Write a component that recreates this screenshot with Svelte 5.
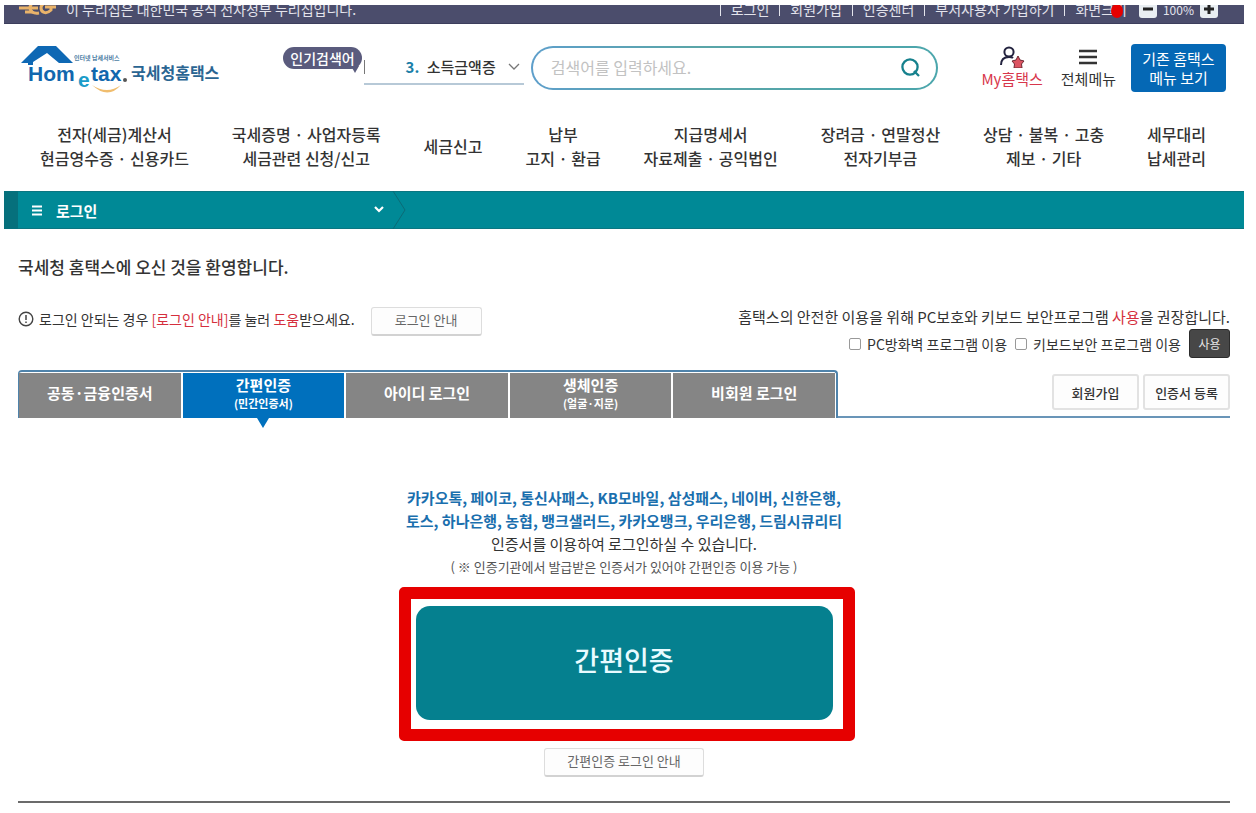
<script lang="ts">
    const utilLinks = ['로그인', '회원가입', '인증센터', '부서사용자 가입하기', '화면크기'];

    const menus = [
        ['전자(세금)계산서', '현금영수증 · 신용카드'],
        ['국세증명 · 사업자등록', '세금관련 신청/신고'],
        ['세금신고'],
        ['납부', '고지 · 환급'],
        ['지급명세서', '자료제출 · 공익법인'],
        ['장려금 · 연말정산', '전자기부금'],
        ['상담 · 불복 · 고충', '제보 · 기타'],
        ['세무대리', '납세관리']
    ];

    const tabs = [
        { name: '공동·금융인증서', sub: '' },
        { name: '간편인증', sub: '(민간인증서)' },
        { name: '아이디 로그인', sub: '' },
        { name: '생체인증', sub: '(얼굴·지문)' },
        { name: '비회원 로그인', sub: '' }
    ];

    let selected = $state(1);
    let zoom = $state(100);
    let keyword = $state('');
    let firewall = $state(false);
    let keyboard = $state(false);
</script>

<div class="page">
    <div class="topbar">
        <div class="gov">
            <svg width="38" height="20" viewBox="0 0 38 20" aria-hidden="true">
                <g fill="none" stroke="#e9b36a" stroke-width="3">
                    <path d="M1 9H14M7 13h8" />
                    <path d="M20 3c-6 0-8 3-8 6s3 6 9 5M13 9h7" />
                    <path d="M35 4c-7-2-12 1-12 5s5 7 10 2v-3h-6M30 8h8" />
                </g>
            </svg>
            <span>이 누리집은 대한민국 공식 전자정부 누리집입니다.</span>
        </div>
        <div class="util">
            {#each utilLinks as link}
                <a href="#util">{link}</a>
            {/each}
            <i class="dot"></i>
            <div class="zoom">
                <button aria-label="축소" onclick={() => (zoom -= 10)}>
                    <svg width="18" height="18" viewBox="0 0 18 18"><path d="M4 9h10" stroke="#222" stroke-width="3" /></svg>
                </button>
                <span>{zoom}%</span>
                <button aria-label="확대" onclick={() => (zoom += 10)}>
                    <svg width="18" height="18" viewBox="0 0 18 18"><path d="M4 9h10M9 4v10" stroke="#222" stroke-width="3" /></svg>
                </button>
            </div>
        </div>
    </div>

    <header>
        <a class="logo" href="#home">
            <svg width="108" height="52" viewBox="0 0 108 52">
                <path d="M0 21L17 4h18l17 17H38L26 11 12 20v3H7v-2z" fill="#0e68b4" />
                <text class="logo-tag" x="53" y="18">인터넷 납세서비스</text>
                <text class="logo-name" x="7" y="39">Hom</text>
                <text class="logo-e" x="57" y="45">e</text>
                <text class="logo-name" x="70" y="39">tax</text>
                <circle cx="104" cy="38" r="2" fill="#555" />
                <path d="M71 43q15 10 29 0q-13 15-29 0z" fill="#f0bd6e" />
            </svg>
            <span>국세청홈택스</span>
        </a>
        <span class="bubble">인기검색어</span>
        <button class="rank">
            <span><b>3.</b> 소득금액증</span>
            <svg width="12" height="8" viewBox="0 0 12 8"><path d="M1 1l5 5 5-5" fill="none" stroke="#777" stroke-width="1.3" /></svg>
        </button>
        <form class="search">
            <input type="text" aria-label="검색어" placeholder="검색어를 입력하세요." bind:value={keyword} />
            <button type="button" aria-label="검색">
                <svg width="20" height="20" viewBox="0 0 20 20"><g fill="none" stroke="#16818d" stroke-width="2.3"><circle cx="9" cy="9" r="7.6" /><path d="M13 13l5 5" /></g></svg>
            </button>
        </form>
        <div class="quick">
            <a class="my" href="#my">
                <svg width="26" height="22" viewBox="0 0 26 22">
                    <g fill="none" stroke="#23233f" stroke-width="2">
                        <circle cx="10" cy="6" r="4.6" />
                        <path d="M2 19c0-5 3-8 8-8 2 0 3 0 4 1" />
                    </g>
                    <path d="M19 10l2 4 4 1-2.500 3 .5 4h-8l.5-4-2.500-3 4-1z" fill="#dd5462" stroke="#6e2933" />
                </svg>
                My홈택스
            </a>
            <a href="#all">
                <svg width="26" height="22" viewBox="0 0 26 22"><path d="M4 5h18M4 11h18M4 17h18" stroke="#333" stroke-width="2.500" /></svg>
                전체메뉴
            </a>
        </div>
        <button class="classic">기존 홈택스<br />메뉴 보기</button>
    </header>

    <nav>
        {#each menus as lines}
            <a href="#menu">
                {#each lines as line}
                    <span>{line}</span>
                {/each}
            </a>
        {/each}
    </nav>

    <div class="location">
        <button>
            <svg width="10" height="11" viewBox="0 0 10 11"><path d="M0 1.500h10M0 5.500h10M0 9.500h10" stroke="#fff" stroke-width="2" /></svg>
            <span>로그인</span>
            <svg width="10" height="8" viewBox="0 0 10 8"><path d="M1 1l4 4 4-4" fill="none" stroke="#fff" stroke-width="2.200" /></svg>
        </button>
        <svg width="14" height="38" viewBox="0 0 14 38"><path d="M1 0l12 19L1 38" fill="none" stroke="#0b6b76" /></svg>
    </div>

    <main>
        <h1>국세청 홈택스에 오신 것을 환영합니다.</h1>

        <div class="notices">
            <div class="help">
                <svg width="16" height="16" viewBox="0 0 16 16"><circle cx="8" cy="8" r="6.800" fill="none" stroke="#444" stroke-width="1.400" /><path d="M8 4v5M8 10.500v1.500" stroke="#444" stroke-width="1.500" /></svg>
                <p>로그인 안되는 경우 <em>[로그인 안내]</em>를 눌러 <em>도움</em>받으세요.</p>
                <button class="small">로그인 안내</button>
            </div>
            <div class="security">
                <p>홈택스의 안전한 이용을 위해 PC보호와 키보드 보안프로그램 <em>사용</em>을 권장합니다.</p>
                <div class="programs">
                    <label><input type="checkbox" bind:checked={firewall} />PC방화벽 프로그램 이용</label>
                    <label><input type="checkbox" bind:checked={keyboard} />키보드보안 프로그램 이용</label>
                    <button>사용</button>
                </div>
            </div>
        </div>

        <div class="tabrow">
            <div class="tabs" role="tablist">
                {#each tabs as tab, i}
                    <button role="tab" aria-selected={selected === i} class:active={selected === i} onclick={() => (selected = i)}>
                        {tab.name}
                        {#if tab.sub}<small>{tab.sub}</small>{/if}
                    </button>
                {/each}
            </div>
            <div class="join">
                <button>회원가입</button>
                <button>인증서 등록</button>
            </div>
        </div>

        <section>
            <p class="providers">
                카카오톡, 페이코, 통신사패스, KB모바일, 삼성패스, 네이버, 신한은행,<br />
                토스, 하나은행, 농협, 뱅크샐러드, 카카오뱅크, 우리은행, 드림시큐리티
            </p>
            <p>인증서를 이용하여 로그인하실 수 있습니다.</p>
            <p class="note">( ※ 인증기관에서 발급받은 인증서가 있어야 간편인증 이용 가능 )</p>
            <div class="auth">
                <button>간편인증</button>
                <i class="frame"></i>
            </div>
            <button class="small guide">간편인증 로그인 안내</button>
        </section>
    </main>
</div>

<style>
    :global(body) {
        background: #fff;
    }

    .page {
        padding: 5px 12px 8px 4px;
        font-family: "Noto Sans CJK KR", sans-serif;
        font-size: 15px;
        color: #333;
    }

    .page * {
        box-sizing: border-box;
    }

    button, input {
        font-family: inherit;
        color: inherit;
    }

    button {
        padding: 0;
        border: none;
        background: none;
        cursor: pointer;
    }

    a {
        color: inherit;
        text-decoration: none;
    }

    p, h1 {
        margin: 0;
    }

    em {
        font-style: normal;
        color: #d52f3d;
    }

    svg {
        display: block;
        flex: none;
    }

    .topbar {
        display: flex;
        justify-content: space-between;
        align-items: flex-end;
        height: 19px;
        padding: 0 26px 0 14px;
        overflow: hidden;
        background: #4b4d6c;
        border-bottom: 1px solid #3c3e5c;
        color: #e4e4ec;
        font-size: 14px;
        white-space: nowrap;
    }

    .gov, .util {
        display: flex;
        align-items: center;
        height: 28px;
    }

    .gov {
        gap: 10px;
    }

    .util {
        position: relative;
    }

    .util a {
        line-height: 13px;
        padding: 0 10px;
        border-left: 1px solid #e4e4ec;
    }

    .dot {
        position: absolute;
        right: 95px;
        top: 9px;
        width: 12px;
        height: 14px;
        border-radius: 50%;
        background: #e60000;
    }

    .zoom {
        display: flex;
        align-items: center;
        gap: 6px;
        padding-left: 2px;
        font-size: 12px;
    }

    .zoom button {
        border-radius: 3px;
        background: #e9eef2;
    }

    header {
        display: flex;
        align-items: center;
        height: 87px;
        padding: 0 18px 0 17px;
    }

    .logo {
        display: flex;
        align-items: center;
        gap: 2px;
        color: #2a6592;
        font-size: 16px;
        font-weight: 700;
    }

    .logo span {
        padding-top: 8px;
    }

    .logo-tag {
        fill: #4c7da3;
        font-size: 6px;
    }

    .logo-name, .logo-e {
        font-family: "Liberation Sans", sans-serif;
        font-size: 21px;
        font-weight: 700;
        fill: #1267ae;
    }

    .logo-e {
        fill: #1b9cc9;
    }

    .bubble {
        position: relative;
        align-self: flex-start;
        margin: 23px 2px 0 64px;
        padding: 0 7px;
        border-radius: 11px;
        background: #5a5b7d;
        color: #fff;
        font-size: 14px;
        font-weight: 500;
        line-height: 22px;
        white-space: nowrap;
    }

    .bubble::after {
        content: "";
        position: absolute;
        right: 3px;
        top: 19px;
        border: 4px solid transparent;
        border-top: 7px solid #5a5b7d;
        border-bottom: none;
    }

    .rank {
        display: flex;
        justify-content: flex-end;
        align-items: center;
        gap: 12px;
        width: 160px;
        height: 34px;
        padding-right: 4px;
        border-bottom: 2px solid #b7c9d7;
        font-size: 15px;
        font-weight: 500;
        white-space: nowrap;
    }

    .rank::before {
        content: "";
        width: 1px;
        height: 14px;
        margin-right: auto;
        background: #777;
    }

    .rank b {
        margin-right: 4px;
        color: #1a7fa8;
    }

    .search {
        display: flex;
        align-items: center;
        flex: 1;
        height: 44px;
        margin: 0 43px 0 7px;
        padding: 0 15px 0 18px;
        border: 2px solid transparent;
        border-radius: 22px;
        background: linear-gradient(#fff, #fff) padding-box, linear-gradient(90deg, #5e9fcb, #5aa5a8 40%, #4ba6ac) border-box;
    }

    .search input {
        flex: 1;
        min-width: 0;
        padding: 0 0 2px;
        border: none;
        outline: none;
        font-size: 16px;
    }

    .search input::placeholder {
        color: #c2c2c2;
    }

    .quick {
        display: flex;
        gap: 18px;
        margin-right: 15px;
        line-height: 22px;
        white-space: nowrap;
    }

    .quick a {
        display: flex;
        flex-direction: column;
        align-items: center;
    }

    .quick .my {
        color: #d8374c;
    }

    .classic {
        width: 95px;
        height: 48px;
        border-radius: 4px;
        background: #0568b5;
        color: #fff;
        font-size: 15px;
        line-height: 19px;
    }

    nav {
        display: flex;
        justify-content: space-between;
        align-items: center;
        height: 80px;
        padding: 0 38px 10px 36px;
        font-size: 16px;
        font-weight: 500;
        line-height: 24px;
        text-align: center;
        white-space: nowrap;
    }

    nav span {
        display: block;
    }

    .location {
        display: flex;
        height: 38px;
        border-left: 14px solid #06707c;
        background: #008996;
        box-shadow: inset 0 1px #0b7681, inset 0 -1px #0b7681;
    }

    .location button {
        display: flex;
        align-items: center;
        gap: 14px;
        width: 374px;
        padding: 0 8px 0 14px;
        color: #fff;
        font-size: 15px;
        font-weight: 700;
    }

    .location button span {
        flex: 1;
        text-align: left;
    }

    main {
        margin: 0 14px;
        border-bottom: 2px solid #6b6b6b;
    }

    h1 {
        padding-top: 24px;
        font-size: 17px;
        font-weight: 500;
        line-height: 28px;
    }

    .notices {
        display: flex;
        justify-content: space-between;
        padding-top: 24px;
        white-space: nowrap;
    }

    .help {
        display: flex;
        align-items: flex-start;
        gap: 5px;
        font-size: 14px;
        line-height: 28px;
    }

    .help svg {
        margin-top: 6px;
    }

    .help .small {
        margin: 2px 0 0 11px;
    }

    .small {
        width: 111px;
        height: 29px;
        padding-bottom: 3px;
        border: 1px solid #ddd;
        border-bottom: 2px solid #d2d2d2;
        border-radius: 3px;
        background: #fdfdfd;
        color: #666;
        font-size: 13px;
    }

    .security {
        line-height: 24px;
        text-align: right;
    }

    .programs {
        display: flex;
        justify-content: flex-end;
        align-items: center;
        gap: 8px;
        font-size: 14px;
    }

    .programs label {
        display: flex;
        align-items: center;
        gap: 6px;
    }

    .programs input {
        appearance: none;
        width: 12px;
        height: 12px;
        margin: 0;
        border: 1px solid #999;
        border-radius: 2px;
    }

    .programs input:checked {
        background: #0568b5;
    }

    .programs button {
        width: 41px;
        height: 29px;
        border: 1px solid #2c2c2c;
        border-radius: 3px;
        background: #474747;
        color: #e6e6e6;
        font-size: 12px;
    }

    .tabrow {
        display: grid;
        grid-template-columns: 820fr 392fr;
        height: 48px;
        margin-top: 12px;
    }

    .tabs {
        display: grid;
        grid-template-columns: repeat(5, 1fr);
        gap: 2px;
        padding: 1px 1px 0 0;
        border: 2px solid #4f83ab;
        border-width: 2px 2px 0 1px;
        border-radius: 4px 4px 0 0;
    }

    .tabs button {
        position: relative;
        padding-bottom: 6px;
        background: #858585;
        color: #fff;
        font-size: 15px;
        font-weight: 700;
        line-height: 20px;
    }

    .tabs small {
        display: block;
        font-size: 11px;
        line-height: 16px;
    }

    .tabs .active {
        background: #0070bd;
    }

    .tabs .active::after {
        content: "";
        position: absolute;
        left: 50%;
        top: 100%;
        margin-left: -6px;
        border: 6px solid transparent;
        border-top: 10px solid #0070bd;
        border-bottom: none;
    }

    .join {
        display: flex;
        justify-content: flex-end;
        gap: 4px;
        padding-top: 4px;
        border-bottom: 2px solid #6995b8;
    }

    .join button {
        width: 87px;
        height: 36px;
        border: 2px solid #e2e2e2;
        border-radius: 3px;
        background: #fdfdfd;
        font-size: 13px;
        font-weight: 500;
        white-space: nowrap;
    }

    section {
        display: flex;
        flex-direction: column;
        align-items: center;
        padding: 68px 0 24px;
        line-height: 23px;
        text-align: center;
    }

    .providers {
        color: #1a6fae;
        font-weight: 700;
    }

    .note {
        color: #555;
        font-size: 13px;
    }

    .auth {
        position: relative;
        margin-top: 28px;
    }

    .auth button {
        width: 417px;
        height: 114px;
        padding-bottom: 8px;
        border-radius: 14px;
        background: #05808f;
        color: #e9fbff;
        font-size: 27px;
        font-weight: 500;
    }

    .frame {
        position: absolute;
        inset: -19px -22px -21px -17px;
        border: 12px solid #e60000;
        border-radius: 5px;
        pointer-events: none;
    }

    .guide {
        width: 160px;
        margin-top: 28px;
    }
</style>
